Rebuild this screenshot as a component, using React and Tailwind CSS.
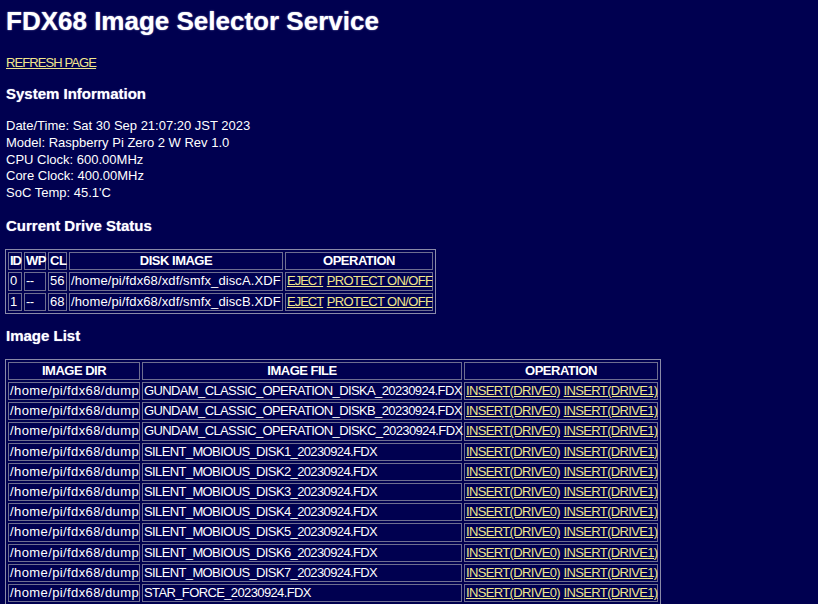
import React from 'react';

const drives = [
    { id: '0', wp: '--', cl: '56', image: '/home/pi/fdx68/xdf/smfx_discA.XDF' },
    { id: '1', wp: '--', cl: '68', image: '/home/pi/fdx68/xdf/smfx_discB.XDF' },
];

const images = [
    'GUNDAM_CLASSIC_OPERATION_DISKA_20230924.FDX',
    'GUNDAM_CLASSIC_OPERATION_DISKB_20230924.FDX',
    'GUNDAM_CLASSIC_OPERATION_DISKC_20230924.FDX',
    'SILENT_MOBIOUS_DISK1_20230924.FDX',
    'SILENT_MOBIOUS_DISK2_20230924.FDX',
    'SILENT_MOBIOUS_DISK3_20230924.FDX',
    'SILENT_MOBIOUS_DISK4_20230924.FDX',
    'SILENT_MOBIOUS_DISK5_20230924.FDX',
    'SILENT_MOBIOUS_DISK6_20230924.FDX',
    'SILENT_MOBIOUS_DISK7_20230924.FDX',
    'STAR_FORCE_20230924.FDX',
];

// old-school table look: border=1, cellspacing=2, cellpadding=1
const tableCls = 'table-fixed border-separate border-spacing-[2px] border border-[#8a8aa8] -ml-[1px]';
const thCls = 'border border-[#6e6e90] px-[1px] py-[1px] leading-[14.2px] font-bold text-center whitespace-nowrap tracking-[-0.5px]';
const tdCls = 'border border-[#6e6e90] px-[1px] py-[1px] leading-[14.2px] text-left whitespace-nowrap';
const linkCls = 'text-[#f0e68c] underline tracking-[-0.65px]';

function Heading({ children, className }) {
    return (
        <h3 className={`text-[15px] font-bold leading-[18px] [text-shadow:0_0_1px_rgba(200,200,255,0.8)] ${className}`}>
            {children}
        </h3>
    );
}

export default function App() {
    return (
        <div className="min-h-screen bg-[#000050] px-[6px] pt-[6px] pb-4 text-[13px] text-white font-['Liberation_Sans',Arial,sans-serif]">
            <h1 className="text-[26px] font-bold leading-[30px] [text-shadow:0_0_1.5px_rgba(210,210,255,0.9)]">
                FDX68 Image Selector Service
            </h1>

            <div className="mt-[18px] leading-[17px]">
                <a href="#" className="text-[#f0e68c] underline tracking-[-0.9px]">REFRESH PAGE</a>
            </div>

            <Heading className="mt-[14px]">System Information</Heading>

            <div className="mt-[15px] leading-[16.75px]">
                <div>Date/Time: Sat 30 Sep 21:07:20 JST 2023</div>
                <div>Model: Raspberry Pi Zero 2 W Rev 1.0</div>
                <div>CPU Clock: 600.00MHz</div>
                <div>Core Clock: 400.00MHz</div>
                <div>SoC Temp: 45.1'C</div>
            </div>

            <Heading className="mt-[15.5px]">Current Drive Status</Heading>

            <table className={`${tableCls} mt-[14px] w-[431px]`}>
                <colgroup>
                    <col className="w-[14px]" />
                    <col className="w-[22px]" />
                    <col className="w-[19px]" />
                    <col className="w-[214px]" />
                    <col className="w-[148px]" />
                </colgroup>
                <thead>
                    <tr>
                        <th className={`${thCls} tracking-[-1px]`}>ID</th>
                        <th className={thCls}>WP</th>
                        <th className={thCls}>CL</th>
                        <th className={thCls}>DISK IMAGE</th>
                        <th className={thCls}>OPERATION</th>
                    </tr>
                </thead>
                <tbody>
                    {drives.map((d) => (
                        <tr key={d.id}>
                            <td className={tdCls}>{d.id}</td>
                            <td className={`${tdCls} tracking-[-0.5px]`}>{d.wp}</td>
                            <td className={tdCls}>{d.cl}</td>
                            <td className={`${tdCls} tracking-[0.12px]`}>{d.image}</td>
                            <td className={tdCls}>
                                <a href="#" className="text-[#f0e68c] underline tracking-[-1px]">EJECT</a>{' '}
                                <a href="#" className={linkCls}>PROTECT ON/OFF</a>
                            </td>
                        </tr>
                    ))}
                </tbody>
            </table>

            <Heading className="mt-[13px]">Image List</Heading>

            <table className={`${tableCls} mt-[14px] w-[656px]`}>
                <colgroup>
                    <col className="w-[132px]" />
                    <col className="w-[320px]" />
                    <col className="w-[194px]" />
                </colgroup>
                <thead>
                    <tr>
                        <th className={thCls}>IMAGE DIR</th>
                        <th className={thCls}>IMAGE FILE</th>
                        <th className={thCls}>OPERATION</th>
                    </tr>
                </thead>
                <tbody>
                    {images.map((name) => (
                        <tr key={name}>
                            <td className={`${tdCls} tracking-[0.4px]`}>/home/pi/fdx68/dump</td>
                            <td className={`${tdCls} tracking-[-0.62px]`}>{name}</td>
                            <td className={tdCls}>
                                <a href="#" className={linkCls}>INSERT(DRIVE0)</a>{' '}
                                <a href="#" className={linkCls}>INSERT(DRIVE1)</a>
                            </td>
                        </tr>
                    ))}
                </tbody>
            </table>
        </div>
    );
}
